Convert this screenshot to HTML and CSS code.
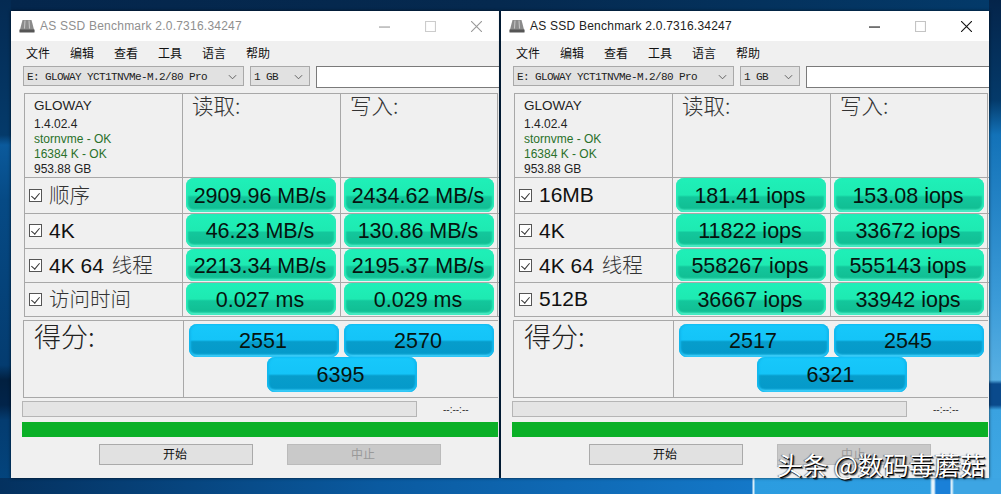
FILE: index.html
```html
<!DOCTYPE html>
<html lang="zh">
<head>
<meta charset="utf-8">
<title>AS SSD Benchmark</title>
<link rel="stylesheet" href="styles.css">
</head>
<body>
<div class="desktop">
  <section class="win win-a">
    <header class="titlebar">
      <svg class="appicon" viewBox="0 0 16 14"><path d="M3.500 1h9L15.500 12.500H.5z" fill="#8b8b8b"/><path d="M.5 10.500h15v3H.5z" fill="#555"/><path d="M6 1.500l-.5 8M10 1.500l.5 8" stroke="#c9c9c9"/></svg>
      <span class="title dim">AS SSD Benchmark 2.0.7316.34247</span>
      <div class="controls dim-controls">
        <svg viewBox="0 0 10 10"><path d="M0 5.500h10" stroke="currentColor"/></svg>
        <svg viewBox="0 0 10 10"><path d="M.5.500h9v9h-9z" fill="none" stroke="currentColor"/></svg>
        <svg viewBox="0 0 10 10"><path d="M0 0l10 10M10 0L0 10" stroke="currentColor"/></svg>
      </div>
    </header>
    <nav class="menu"><span>文件</span><span>编辑</span><span>查看</span><span>工具</span><span>语言</span><span>帮助</span></nav>
    <div class="selects">
      <div class="select drive"><span>E: GLOWAY YCT1TNVMe-M.2/80 Pro</span><svg viewBox="0 0 10 6"><path d="M1 1l4 4 4-4" fill="none" stroke="#555"/></svg></div>
      <div class="select size"><span>1 GB</span><svg viewBox="0 0 10 6"><path d="M1 1l4 4 4-4" fill="none" stroke="#555"/></svg></div>
      <div class="blank"></div>
    </div>
    <div class="table">
      <div class="cell info"><div class="name">GLOWAY</div><div>1.4.02.4</div><div class="ok">stornvme - OK</div><div class="ok">16384 K - OK</div><div>953.88 GB</div></div>
      <div class="cell head">读取:</div>
      <div class="cell head">写入:</div>
      <div class="cell label"><i class="check"></i><span class="cjk">顺序</span></div><div class="cell val"><b>2909.96 MB/s</b></div><div class="cell val"><b>2434.62 MB/s</b></div>
      <div class="cell label"><i class="check"></i><span>4K</span></div><div class="cell val"><b>46.23 MB/s</b></div><div class="cell val"><b>130.86 MB/s</b></div>
      <div class="cell label"><i class="check"></i><span>4K 64 <em class="cjk">线程</em></span></div><div class="cell val"><b>2213.34 MB/s</b></div><div class="cell val"><b>2195.37 MB/s</b></div>
      <div class="cell label"><i class="check"></i><span class="cjk">访问时间</span></div><div class="cell val"><b>0.027 ms</b></div><div class="cell val"><b>0.029 ms</b></div>
    </div>
    <div class="score">
      <div class="score-label">得分:</div>
      <div class="score-vals"><b>2551</b><b>2570</b><b class="total">6395</b></div>
    </div>
    <div class="progress-row"><div class="bar"></div><span class="time">--:--:--</span></div>
    <div class="green"></div>
    <div class="buttons"><div class="btn">开始</div><div class="btn off">中止</div></div>
  </section>

  <section class="win win-b">
    <header class="titlebar">
      <svg class="appicon" viewBox="0 0 16 14"><path d="M3.500 1h9L15.500 12.500H.5z" fill="#8b8b8b"/><path d="M.5 10.500h15v3H.5z" fill="#555"/><path d="M6 1.500l-.5 8M10 1.500l.5 8" stroke="#c9c9c9"/></svg>
      <span class="title">AS SSD Benchmark 2.0.7316.34247</span>
      <div class="controls">
        <svg viewBox="0 0 10 10"><path d="M0 5.500h10" stroke="currentColor"/></svg>
        <svg class="faint" viewBox="0 0 10 10"><path d="M.5.500h9v9h-9z" fill="none" stroke="currentColor"/></svg>
        <svg viewBox="0 0 10 10"><path d="M0 0l10 10M10 0L0 10" stroke="currentColor"/></svg>
      </div>
    </header>
    <nav class="menu"><span>文件</span><span>编辑</span><span>查看</span><span>工具</span><span>语言</span><span>帮助</span></nav>
    <div class="selects">
      <div class="select drive"><span>E: GLOWAY YCT1TNVMe-M.2/80 Pro</span><svg viewBox="0 0 10 6"><path d="M1 1l4 4 4-4" fill="none" stroke="#555"/></svg></div>
      <div class="select size"><span>1 GB</span><svg viewBox="0 0 10 6"><path d="M1 1l4 4 4-4" fill="none" stroke="#555"/></svg></div>
      <div class="blank"></div>
    </div>
    <div class="table">
      <div class="cell info"><div class="name">GLOWAY</div><div>1.4.02.4</div><div class="ok">stornvme - OK</div><div class="ok">16384 K - OK</div><div>953.88 GB</div></div>
      <div class="cell head">读取:</div>
      <div class="cell head">写入:</div>
      <div class="cell label"><i class="check"></i><span>16MB</span></div><div class="cell val"><b>181.41 iops</b></div><div class="cell val"><b>153.08 iops</b></div>
      <div class="cell label"><i class="check"></i><span>4K</span></div><div class="cell val"><b>11822 iops</b></div><div class="cell val"><b>33672 iops</b></div>
      <div class="cell label"><i class="check"></i><span>4K 64 <em class="cjk">线程</em></span></div><div class="cell val"><b>558267 iops</b></div><div class="cell val"><b>555143 iops</b></div>
      <div class="cell label"><i class="check"></i><span>512B</span></div><div class="cell val"><b>36667 iops</b></div><div class="cell val"><b>33942 iops</b></div>
    </div>
    <div class="score">
      <div class="score-label">得分:</div>
      <div class="score-vals"><b>2517</b><b>2545</b><b class="total">6321</b></div>
    </div>
    <div class="progress-row"><div class="bar"></div><span class="time">--:--:--</span></div>
    <div class="green"></div>
    <div class="buttons"><div class="btn">开始</div><div class="btn off">中止</div></div>
  </section>
  <div class="watermark">头条 @数码毒蘑菇</div>
</div>
</body>
</html>
```
FILE: styles.css
```css
* { box-sizing: border-box; }
html, body { margin: 0; padding: 0; }
body { width: 1001px; height: 494px; overflow: hidden; font-family: "Liberation Sans", "Noto Sans CJK SC", sans-serif; }
.desktop {
  position: relative; width: 1001px; height: 494px; overflow: hidden;
  background-repeat: no-repeat;
  background-image:
    linear-gradient(90deg, #04315f 0px, #0a5aa0 380px, #1478c8 752px, #d8eefa 753px, #d8eefa 754px, #2b9ce0 755px, #2f9fe2 930px, #e6f4fc 932px, #e6f4fc 934px, #1a80d8 936px, #1a80d8 950px, #d8eefa 951px, #d8eefa 952px, #3da5e3 954px),
    linear-gradient(180deg, #04244a 0, #043a6a 100px, #1372b8 135px, #3b9bd8 300px, #58b0e3 380px, #0a4a8c 384px, #0a4a8c 405px, #3aa2e0 410px, #3fa8e5 494px),
    linear-gradient(180deg, #042a52 0, #043a6a 135px, #0b5a9c 145px, #064a85 200px, #043c70 365px, #022040 380px, #02244a 405px, #043c70 420px, #034680 494px),
    linear-gradient(90deg, #04264c 0, #05294f 500px, #033a6a 1001px);
  background-size: 1001px 16px, 12px 494px, 11px 494px, 1001px 11px;
  background-position: 0 478px, 989px 0, 0 0, 0 0;
  background-color: #04294f;
}
.win { position: absolute; top: 11px; width: 488px; height: 467px; background: #f0f0f0; box-shadow: 0 0 3px rgba(0,0,0,.7); display: flex; flex-direction: column; }
.win-a { left: 11px; }
.win-b { left: 501px; }
.titlebar { height: 30px; background: #fff; display: flex; align-items: center; padding-left: 8px; flex: none; }
.appicon { width: 16px; height: 14px; margin-right: 5px; }
.title { font-size: 12px; color: #222; letter-spacing: .23px; }
.title.dim { color: #8f8f8f; }
.controls { margin-left: auto; display: flex; color: #111; align-items: center; height: 30px; }
.controls svg { width: 11px; height: 11px; margin: 0 17.500px; }
.controls svg.faint { color: #c4c4c4; }
.dim-controls { color: #999; }
.dim-controls svg:nth-child(2) { color: #ccc; }
.menu { height: 25px; display: flex; align-items: center; padding: 0 0 2px 15px; gap: 20px; font-size: 12px; color: #111; flex: none; }
.selects { display: flex; height: 20px; margin-left: 12px; flex: none; }
.select { background: #e1e1e1; border: 1px solid #a9a9a9; display: flex; align-items: center; justify-content: space-between; padding: 2px 6px 0 3px; font: 11px "Liberation Mono", monospace; color: #222; letter-spacing: -.6px; }
.select svg { width: 9px; height: 6px; }
.drive { width: 221px; margin-right: 6px; }
.size { width: 60px; margin-right: 6px; }
.blank { width: 183px; background: #fff; border: 1px solid #7a7a7a; border-right: 0; height: 22px; }
.table { display: grid; grid-template-columns: 158px 158px 158px; grid-template-rows: 84px 36px 35px 34px 34px; width: 474px; margin: 7px 0 0 13px; border: 1px solid #a8a8a8; border-bottom: 0; flex: none; }
.cell { border-right: 1px solid #a8a8a8; border-bottom: 1px solid #a8a8a8; min-width: 0; }
.cell:nth-child(3n) { border-right: 0; }
.info { padding: 2px 0 0 9px; font-size: 12px; line-height: 15px; color: #222; }
.info .name { font-size: 13.500px; line-height: 19px; margin-bottom: 2px; }
.ok { color: #2a702a; }
.head { font: 300 21.500px/22px "Noto Sans CJK SC", sans-serif; color: #333; padding: 0 0 0 9px; }
.label { display: flex; align-items: center; padding-left: 3px; font-size: 21px; color: #111; gap: 8px; padding-bottom: 1px; white-space: nowrap; line-height: 24px; }
.cjk { font: 300 20.500px/24px "Noto Sans CJK SC", sans-serif; color: #333; }
.label > .cjk { margin-bottom: 3px; }
em.cjk { margin-left: 2px; }
.check { width: 13px; height: 13px; border: 1px solid #555; background: #fff; position: relative; flex: none; margin-left: 1px; margin-right: -1px; }
.check::after { content: ""; position: absolute; left: 3px; top: 1px; width: 4px; height: 7px; border: solid #333; border-width: 0 1px 1px 0; transform: rotate(40deg); }
.val { padding: 0 2px 1px 3px; display: flex; min-height: 0; }
.val b, .score-vals b { font-weight: 400; display: flex; align-items: center; justify-content: center; color: #06140f; white-space: nowrap; padding: 2px 2px 0 0; }
.val b { width: 150px; font-size: 21.500px; border-radius: 8px; background: linear-gradient(180deg, #1ff0b8 0%, #1eeab2 50%, #13c79c 56%, #11bf94 88%, #1fdcae 100%); box-shadow: inset 2px 0 2px #28eab8, inset -2px 0 2px #28eab8, inset 0 -2px 2px #60f0cc; }
.score { display: grid; grid-template-columns: 160px 315px; height: 78px; width: 475px; margin: 3px 0 0 12px; border: 1px solid #a8a8a8; border-right: 0; flex: none; }
.score-label { font: 300 27px/30px "Noto Sans CJK SC", sans-serif; padding-left: 10px; color: #222; border-right: 1px solid #a8a8a8; }
.score-vals { display: grid; grid-template-columns: 150px 150px; grid-template-rows: 33px 35px; column-gap: 5px; padding: 3px 0 0 5px; }
.score-vals b { font-size: 21.500px; border-radius: 8px; background: linear-gradient(180deg, #17c8fb 0%, #14c4f8 48%, #079dcb 54%, #059aca 88%, #12b2e4 100%); box-shadow: inset 2px 0 2px #12b8ee, inset -2px 0 2px #12b8ee, inset 0 -2px 2px #50d8ff; }
.score-vals .total { grid-column: 1 / span 2; width: 150px; justify-self: center; }
.progress-row { display: flex; align-items: center; margin: 3px 0 0 11px; height: 16px; flex: none; }
.bar { width: 395px; height: 16px; background: #e4e4e4; border: 1px solid #b5b5b5; }
.time { font-size: 10px; margin-left: 26px; color: #333; }
.green { width: 476px; height: 15px; margin: 5px 0 0 11px; background: #0bb027; flex: none; }
.buttons { display: flex; margin: 7px 0 0 88px; gap: 34px; flex: none; }
.btn { width: 154px; height: 21px; border: 1px solid #aaa; background: #e1e1e1; display: flex; align-items: center; justify-content: center; font-size: 12px; color: #111; padding: 0 2px 2px 0; }
.btn.off { background: #c9c9c9; color: #999; border-color: #bbb; }
.watermark { position: absolute; left: 777px; top: 448px; font: 400 25.500px/32px "Noto Sans CJK SC", sans-serif; color: #fff; text-shadow: 1px 1px 0 #000, 2px 2px 1px rgba(0,0,0,.6), -1px 0 1px rgba(0,0,0,.5); white-space: nowrap; }
```
